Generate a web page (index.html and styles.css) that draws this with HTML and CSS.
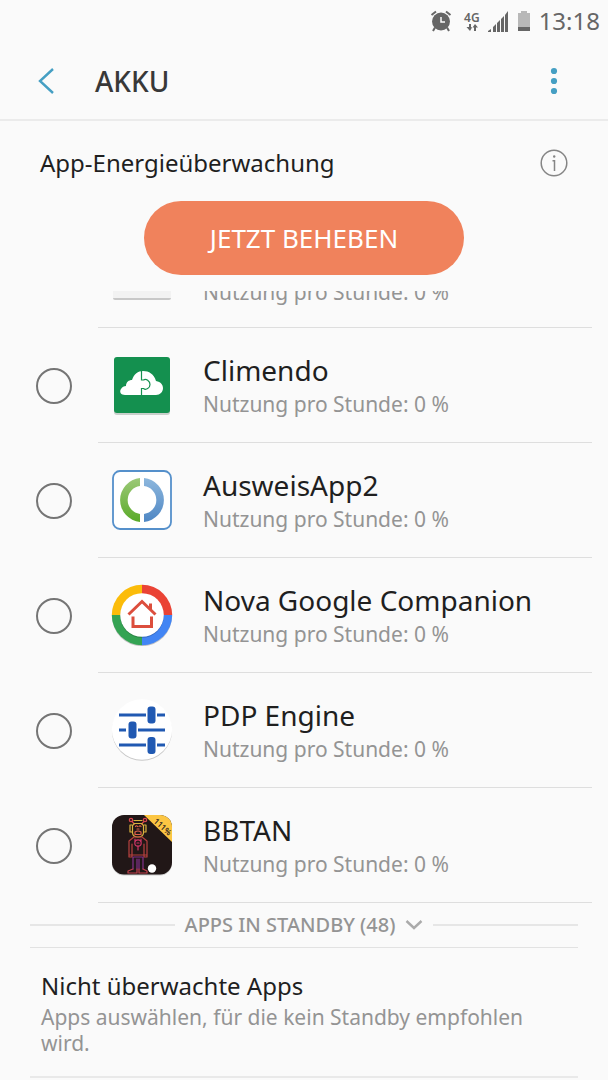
FILE: index.html
```html
<!DOCTYPE html>
<html lang="de">
<head>
<meta charset="utf-8">
<meta name="viewport" content="width=device-width, initial-scale=1">
<title>Akku</title>
<link rel="stylesheet" href="styles.css">
</head>
<body>
<div class="status">
  <svg width="22" height="22" viewBox="0 0 22 22"><path d="M1.500 5 6 1.500M20.500 5 16 1.500M5 17.500 3 21M17 17.500 19 21" stroke="#666" stroke-width="2"/><circle cx="11" cy="11.500" r="9" fill="#666"/><path d="M11 7V12H15" fill="none" stroke="#fafafa" stroke-width="1.500"/></svg>
  <div class="network">
    <span>4G</span>
    <svg width="12" height="7" viewBox="0 0 12 7"><path d="M3 0V3H0.500L4 7 6 3.500 5 3V0ZM8 7V3.500H6.500L9 0 12 3.500H10V7Z" fill="#666"/></svg>
  </div>
  <svg width="21" height="21" viewBox="0 0 21 21"><path d="M0 21V20L3 18V21ZM5 21V16L8 13V21ZM9 21V12L12 9V21ZM13 21V8L16 5V21ZM17 21V4L20 0V21Z" fill="#666"/></svg>
  <svg width="14" height="21" viewBox="0 0 14 21"><path d="M4 0H10V2H13V16H1V2H4Z" fill="#b8b8b8"/><path d="M1 16H13V20H1Z" fill="#666"/></svg>
  <time class="clock">13:18</time>
</div>

<header class="header">
  <button class="icon-button" type="button" aria-label="Zurück"><svg width="18" height="28" viewBox="0 0 18 28"><path d="M16 2 3 14 16 26" fill="none" stroke="#459fc3" stroke-width="2.400"/></svg></button>
  <h1 class="page-title">AKKU</h1>
  <button class="icon-button" type="button" aria-label="Weitere Optionen"><svg width="8" height="28" viewBox="0 0 8 28"><g fill="#459fc3"><circle cx="4" cy="4" r="3.100"/><circle cx="4" cy="14" r="3.100"/><circle cx="4" cy="24" r="3.100"/></g></svg></button>
</header>

<main>
  <section class="monitor">
    <div class="monitor-head">
      <h2 class="section-title">App-Energieüberwachung</h2>
      <button class="icon-button" type="button" aria-label="Info"><svg width="28" height="28" viewBox="0 0 28 28"><circle cx="14" cy="14" r="12.800" fill="none" stroke="#858585" stroke-width="1.500"/><path d="M12.500 11.800H14.500V22" fill="none" stroke="#858585" stroke-width="1.500"/><circle cx="14.200" cy="7.500" r="1.200" fill="#858585"/></svg></button>
    </div>
    <button class="fix-button" type="button">JETZT BEHEBEN</button>
  </section>

  <ul class="apps">
    <li class="app app-cut">
      <div class="app-body">
        <span class="blank-icon"></span>
        <span class="app-text"><span class="app-sub">Nutzung pro Stunde: 0 %</span></span>
      </div>
    </li>
    <li><label class="app">
      <input class="check" type="checkbox">
      <span class="app-body">
        <svg class="app-icon" viewBox="0 0 62 62"><rect x="3" y="4" width="56" height="57" rx="3" fill="#c9cfcb"/><rect x="3" y="3" width="56" height="56" rx="3" fill="#14904f"/><path d="M14 41C10 41 8 38 10 35 11 33 13 32 15 32 15 28 18 26 21 26 23 20 27 17 32 17 38 17 43 20 45 27 50 28 52 31 52 34 52 38 49 41 45 41Z" fill="#fff"/><path d="M30.500 16V26H32.500C35 24 39 27 39 30.500 39 34 35 36.500 32.500 34.500H30.500V42" fill="none" stroke="#14904f" stroke-width="1.200"/></svg>
        <span class="app-text"><span class="app-name">Climendo</span><span class="app-sub">Nutzung pro Stunde: 0 %</span></span>
      </span>
    </label></li>
    <li><label class="app">
      <input class="check" type="checkbox">
      <span class="app-body">
        <svg class="app-icon" viewBox="0 0 62 62"><defs><linearGradient id="green" x2="0" y2="1"><stop stop-color="#9cc978"/><stop offset="1" stop-color="#5aaa28"/></linearGradient><linearGradient id="blue" x2="0" y2="1"><stop stop-color="#8db7dd"/><stop offset="1" stop-color="#4f87c4"/></linearGradient></defs><rect x="2" y="2" width="58" height="58" rx="7" fill="#fff" stroke="#5590cb" stroke-width="1.800"/><path d="M29 9.100V17.100A14 14 0 0 0 29 44.900V52.900A22 22 0 0 1 29 9.100Z" fill="url(#green)"/><path d="M33 9.100V17.100A14 14 0 0 1 33 44.900V52.900A22 22 0 0 0 33 9.100Z" fill="url(#blue)"/></svg>
        <span class="app-text"><span class="app-name">AusweisApp2</span><span class="app-sub">Nutzung pro Stunde: 0 %</span></span>
      </span>
    </label></li>
    <li><label class="app">
      <input class="check" type="checkbox">
      <span class="app-body">
        <svg class="app-icon" viewBox="0 0 62 62"><circle cx="31" cy="32.200" r="30" fill="#c4c4c4"/><path d="M31 31V.8A30.200 30.200 0 0 0 .8 31Z" fill="#fbbc0a"/><path d="M31 31V.8A30.200 30.200 0 0 1 61.200 31Z" fill="#ea4335"/><path d="M31 31H61.200A30.200 30.200 0 0 1 31 61.200Z" fill="#4285f4"/><path d="M31 31H.8A30.200 30.200 0 0 0 31 61.200Z" fill="#34a353"/><circle cx="31" cy="32" r="21.800" fill="#000" opacity=".2"/><circle cx="31" cy="31" r="21.800" fill="#fff"/><path d="M17.500 30.500 31 17.500 44.500 30.500M39.500 25V19.500M22 32.500V42.500H40.500V32.500" fill="none" stroke="#dc4e3d" stroke-width="3"/></svg>
        <span class="app-text"><span class="app-name">Nova Google Companion</span><span class="app-sub">Nutzung pro Stunde: 0 %</span></span>
      </span>
    </label></li>
    <li><label class="app">
      <input class="check" type="checkbox">
      <span class="app-body">
        <svg class="app-icon" viewBox="0 0 62 62"><circle cx="31" cy="31.800" r="30" fill="#c8c8c8"/><circle cx="31" cy="30.500" r="30.200" fill="#fff"/><g fill="#2059b2"><path d="M8 14.500H35V17.500H8ZM46 14.500H54V17.500H46ZM8 29.500H15V32.500H8ZM27 29.500H54V32.500H27ZM8 44.500H35V47.500H8ZM46 44.500H54V47.500H46Z"/><rect x="36.500" y="7.500" width="8" height="17" rx="3"/><rect x="17.500" y="22.500" width="8" height="17" rx="3"/><rect x="36.500" y="38" width="8" height="17" rx="3"/></g></svg>
        <span class="app-text"><span class="app-name">PDP Engine</span><span class="app-sub">Nutzung pro Stunde: 0 %</span></span>
      </span>
    </label></li>
    <li><label class="app">
      <input class="check" type="checkbox">
      <span class="app-body">
        <svg class="app-icon" viewBox="0 0 62 62"><rect x="1" y="1.500" width="60" height="60" rx="12" fill="#ccc"/><rect x="1" y="1" width="60" height="59.500" rx="12" fill="#211717"/><path d="M33 1H49A12 12 0 0 1 61 13V28Z" fill="#fcc643"/><text class="badge-text" transform="translate(42 8) rotate(42)">111%</text>
          <g fill="none" stroke-width="1.200" stroke-linecap="round" stroke-linejoin="round"><g stroke="#d8444d"><circle cx="20" cy="6" r="1.700"/><circle cx="34" cy="6" r="1.700"/><path d="M21 7.500 23.500 10M33 7.500 30.500 10"/></g><path d="M23 6.500H31M23 9.500H31L32.500 12V19Q32 23 27 23T21.500 19V12ZM21 11H19V18H21M33 11H35V18H33" stroke="#d9b13e"/><path d="M24.500 12.500Q25.500 11 26.500 12.500M28 12.500Q29 11 30 12.500M24 18Q27 16 30 18V20.500H24ZM26 15H28" stroke="#e0604b"/><path d="M23 23H31L36 27V43H33V30M23 23 18 27V43H21V30M21 41H33M18 41H21M33 41H36" stroke="#b7413f"/><circle cx="27" cy="29" r="3.200" stroke="#cf3567"/><path d="M26 29H28M27 32V36M24 25V27M30 25V27" stroke="#cf3567"/><path d="M22 43V55M26 45V55M28 45V55M32 43V55M23 43H31" stroke="#83318b"/><path d="M22 55 17 57V59H26V55M32 55 36 57V59H28V55" stroke="#c1414c"/></g><circle cx="41" cy="54.500" r="4.200" fill="#fff"/></svg>
        <span class="app-text"><span class="app-name">BBTAN</span><span class="app-sub">Nutzung pro Stunde: 0 %</span></span>
      </span>
    </label></li>
  </ul>

  <div class="lower">
    <button class="standby" type="button">
      <span>APPS IN STANDBY (48)</span>
      <svg width="18" height="12" viewBox="0 0 18 12"><path d="M1.500 2 9 9 16.500 2" fill="none" stroke="#aaa" stroke-width="2.400"/></svg>
    </button>
    <a class="unmonitored" href="#">
      <span class="section-title">Nicht überwachte Apps</span>
      <span class="unmonitored-sub">Apps auswählen, für die kein Standby empfohlen wird.</span>
    </a>
  </div>
</main>
</body>
</html>
```
FILE: styles.css
```css
* { box-sizing: border-box; }

body {
  margin: 0;
  background: #fafafa;
  color: #1f1f1f;
  font-family: "Noto Sans", "Open Sans", sans-serif;
}

button {
  margin: 0;
  padding: 0;
  border: 0;
  background: none;
  color: inherit;
  font: inherit;
}

svg { display: block; flex: none; }

.status {
  display: flex;
  justify-content: flex-end;
  align-items: center;
  gap: 8px;
  height: 42px;
  padding-right: 8px;
  color: #666;
}

.network {
  display: flex;
  flex-direction: column;
  align-items: center;
  margin-left: 4px;
  font-size: 12px;
  font-weight: 600;
  line-height: 12px;
}

.clock {
  font-size: 24px;
  line-height: 32px;
}

.header {
  display: flex;
  align-items: center;
  height: 79px;
  padding: 0 40px 0 32px;
  border-bottom: 2px solid #ebebeb;
}

.icon-button {
  display: grid;
  place-items: center;
  flex: none;
  width: 28px;
  height: 28px;
}

.page-title {
  flex: 1;
  margin: 0 0 0 35px;
  color: #383838;
  font-size: 28px;
  font-weight: 500;
  line-height: 38px;
}

.monitor {
  display: flex;
  flex-direction: column;
  align-items: center;
  padding: 24px 40px 16px;
}

.monitor-head {
  display: flex;
  justify-content: space-between;
  align-items: center;
  width: 100%;
  margin-bottom: 20px;
}

.section-title {
  margin: 0;
  font-size: 24px;
  font-weight: 400;
  line-height: 36px;
}

.fix-button {
  width: 320px;
  max-width: 100%;
  padding: 18px 0;
  border-radius: 37px;
  background: #f0825c;
  color: #fff;
  font-size: 26px;
  line-height: 38px;
}

.apps {
  margin: 0;
  padding: 0;
  list-style: none;
}

.app {
  display: flex;
  align-items: center;
  height: 115px;
  padding: 0 16px 0 36px;
}

.app-cut {
  align-items: flex-end;
  height: 37px;
  padding-left: 98px;
  overflow: hidden;
}

.check {
  appearance: none;
  flex: none;
  width: 36px;
  height: 36px;
  margin: 0 26px 0 0;
  border: 2px solid #757575;
  border-radius: 50%;
}

.check:checked { background: #459fc3; }

.app-body {
  display: flex;
  align-items: center;
  flex: 1;
  height: 115px;
  padding-left: 13px;
  border-bottom: 1px solid #dedede;
}

.app-cut .app-body {
  align-items: flex-end;
  padding-bottom: 20px;
}

.app-icon {
  width: 62px;
  height: 62px;
}

.blank-icon {
  width: 58px;
  height: 58px;
  margin: 0 2px 7px;
  border-bottom: 2px solid #c8c8c8;
  border-radius: 2px;
  background: #f2f2f2;
}

.app-text {
  display: flex;
  flex-direction: column;
  margin-left: 30px;
}

.app-name {
  font-size: 28px;
  line-height: 38px;
}

.app-sub {
  color: #949494;
  font-size: 21px;
  line-height: 30px;
}

.badge-text {
  fill: #2b2020;
  font-size: 8px;
  font-weight: 600;
}

.lower { padding: 0 30px; }

.standby {
  display: flex;
  align-items: center;
  gap: 10px;
  width: 100%;
  height: 45px;
  border-bottom: 1px solid #e2e2e2;
  color: #949494;
  font-size: 20px;
  font-weight: 500;
  line-height: 28px;
}

.standby::before,
.standby::after {
  content: "";
  flex: 1;
  height: 2px;
  background: #e6e6e6;
}

.unmonitored {
  display: flex;
  flex-direction: column;
  padding: 20px 11px;
  border-bottom: 2px solid #e9e9e9;
  color: inherit;
  text-decoration: none;
}

.unmonitored-sub {
  color: #949494;
  font-size: 21px;
  line-height: 26px;
}
```
